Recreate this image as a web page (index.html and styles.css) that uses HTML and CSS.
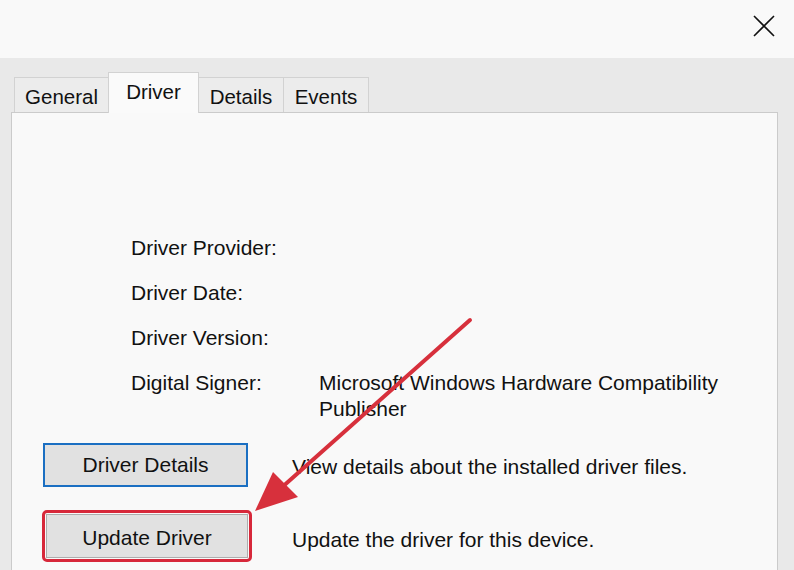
FILE: index.html
```html
<!DOCTYPE html>
<html lang="en">
<head>
    <meta charset="UTF-8">
    <title>Device Properties - Driver</title>
    <link rel="stylesheet" href="styles.css">
</head>
<body>
    <!-- title bar -->
    <div class="titlebar">
        <button class="close-btn" aria-label="Close">
            <svg width="22" height="22" viewBox="0 0 22 22">
                <path d="M1 1 L21 21 M21 1 L1 21" stroke="#111" stroke-width="1.6" fill="none"/>
            </svg>
        </button>
    </div>

    <!-- dialog body -->
    <div class="dialog">
        <div class="tabs">
            <div class="tab">General</div>
            <div class="tab active">Driver</div>
            <div class="tab">Details</div>
            <div class="tab">Events</div>
        </div>

        <div class="panel">
            <div class="info">
                <span class="label">Driver Provider:</span>
                <span class="value"></span>
                <span class="label">Driver Date:</span>
                <span class="value"></span>
                <span class="label">Driver Version:</span>
                <span class="value"></span>
                <span class="label">Digital Signer:</span>
                <span class="value">Microsoft Windows Hardware Compatibility Publisher</span>
            </div>

            <div class="actions">
                <div class="action-row">
                    <div class="btn-cell">
                        <button class="win-btn focused">Driver Details</button>
                    </div>
                    <span class="desc">View details about the installed driver files.</span>
                </div>
                <div class="action-row">
                    <div class="btn-cell">
                        <div class="highlight-box">
                            <button class="win-btn">Update Driver</button>
                        </div>
                    </div>
                    <span class="desc lower">Update the driver for this device.</span>
                </div>
            </div>
        </div>
    </div>

    <!-- annotation arrow -->
    <svg class="annotation" width="794" height="570" viewBox="0 0 794 570">
        <line x1="470" y1="320" x2="280" y2="489" stroke="#d7303c" stroke-width="4" stroke-linecap="round"/>
        <polygon points="255,511 273,472 298,497" fill="#d7303c"/>
    </svg>
</body>
</html>
```

FILE: styles.css
```css
/* base */
body {
    margin: 0;
    font-family: "Liberation Sans", Arial, sans-serif;
    color: #111;
    background: #e9e9e9;
    width: 794px;
    height: 570px;
    overflow: hidden;
    position: relative;
}

/* title bar */
.titlebar {
    height: 58px;
    background: #f9f9f9;
    display: flex;
    justify-content: flex-end;
    align-items: flex-start;
}

.close-btn {
    background: none;
    border: none;
    padding: 0;
    margin: 15px 19px 0 0;
    width: 22px;
    height: 22px;
}

/* dialog body */
.dialog {
    padding: 14px 16px 0 11px;
}

.tabs {
    display: flex;
    align-items: flex-end;
    padding-left: 3px;
    height: 40px;
}

.tab {
    height: 35px;
    padding: 0 10px;
    box-sizing: border-box;
    display: flex;
    align-items: center;
    justify-content: center;
    font-size: 20.5px;
    background: #ececec;
    border: 1px solid #d2d2d2;
    border-bottom: none;
    margin-right: -1px;
}

.tab:nth-child(1) { width: 95px; padding-top: 3px; }
.tab:nth-child(3) { width: 86px; padding-top: 3px; }
.tab:nth-child(4) { width: 86px; padding-top: 3px; }

.tab.active {
    width: 91px;
    height: 41px;
    background: #fafafa;
    margin-bottom: -1px;
    position: relative;
    z-index: 1;
    padding-bottom: 2px;
}

.panel {
    background: #f9f9f9;
    border: 1px solid #cbcbcb;
    height: 470px;
    padding: 122px 0 0 0;
    box-sizing: border-box;
}

/* info grid */
.info {
    display: grid;
    grid-template-columns: 188px 430px;
    row-gap: 19px;
    padding-left: 119px;
    font-size: 21px;
    line-height: 26px;
}

/* buttons */
.actions {
    margin-top: 21px;
    padding-left: 31px;
    display: flex;
    flex-direction: column;
    gap: 23px;
}

.action-row {
    display: flex;
    align-items: center;
}

.btn-cell {
    width: 249px;
}

.win-btn {
    font-family: "Liberation Sans", Arial, sans-serif;
    font-size: 21px;
    color: #111;
    background: #e1e1e1;
    border: 1px solid #adadad;
    width: 202px;
    height: 44px;
    padding: 3px 0 0 0;
}

.win-btn.focused {
    width: 205px;
    height: 44px;
    border: 2px solid #1b6fc2;
    padding: 0;
}

.highlight-box {
    display: inline-block;
    margin-left: -1px;
    border: 3px solid #d7283a;
    border-radius: 5px;
    padding: 1px;
}

.highlight-box .win-btn {
    display: block;
}

.desc {
    font-size: 21px;
    padding-top: 3px;
}

.desc.lower {
    padding-top: 8px;
}

/* annotation overlay */
.annotation {
    position: absolute;
    left: 0;
    top: 0;
    pointer-events: none;
}
```
